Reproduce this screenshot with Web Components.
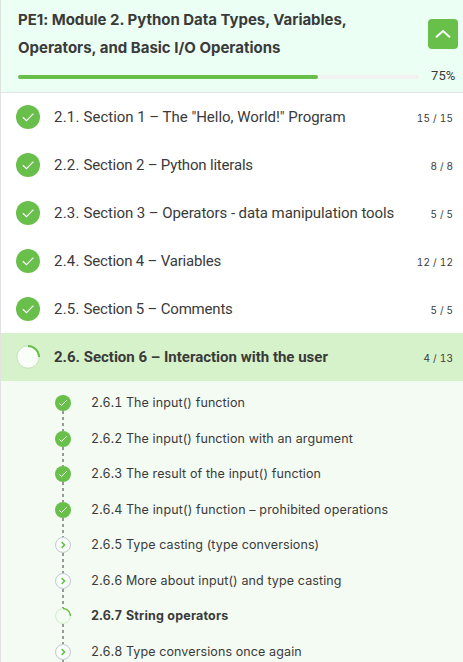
<!DOCTYPE html>
<html lang="en">
<head>
<meta charset="utf-8">
<title>Course outline</title>
<style>
html, body { margin: 0; height: 100%; overflow: hidden; background: #fff; }
body { font-family: Inter, "Liberation Sans", sans-serif; color: #3a3a3a; --green: #68bf4a; }
</style>
</head>
<body>
<course-outline>
  <module-header value="75"><span style="letter-spacing:-.03px">PE1: Module 2. Python Data Types, Variables,</span><br>Operators, and Basic I/O Operations</module-header>
  <section-row state="done" num="2.1." count="15 / 15" style="--track:-.02px">Section 1 – The "Hello, World!" Program</section-row>
  <section-row state="done" num="2.2." count="8 / 8" style="--track:-.19px">Section 2 – Python literals</section-row>
  <section-row state="done" num="2.3." count="5 / 5" style="--track:-.08px">Section 3 – Operators - data manipulation tools</section-row>
  <section-row state="done" num="2.4." count="12 / 12" style="--track:-.2px">Section 4 – Variables</section-row>
  <section-row state="done" num="2.5." count="5 / 5" style="--track:-.2px">Section 5 – Comments</section-row>
  <section-row state="progress" active num="2.6." count="4 / 13">Section 6 – Interaction with the user</section-row>
  <lesson-list>
    <lesson-item state="done" num="2.6.1">The input() function</lesson-item>
    <lesson-item state="done" num="2.6.2">The input() function with an argument</lesson-item>
    <lesson-item state="done" num="2.6.3">The result of the input() function</lesson-item>
    <lesson-item state="done" num="2.6.4" style="--track:.14px">The input() function – prohibited operations</lesson-item>
    <lesson-item state="todo" num="2.6.5">Type casting (type conversions)</lesson-item>
    <lesson-item state="todo" num="2.6.6">More about input() and type casting</lesson-item>
    <lesson-item state="progress" active num="2.6.7" style="--track:.2px;--num-track:.1px">String operators</lesson-item>
    <lesson-item state="todo" num="2.6.8">Type conversions once again</lesson-item>
  </lesson-list>
</course-outline>
<script>
const define = (name, html, setup, observed = []) => {
  const template = document.createElement('template');
  template.innerHTML = html;
  customElements.define(name, class extends HTMLElement {
    static observedAttributes = observed;
    constructor() {
      super();
      this.attachShadow({ mode: 'open' }).append(template.content.cloneNode(true));
    }
    connectedCallback() { if (setup) setup(this, this.shadowRoot); }
    attributeChangedCallback() { if (this.isConnected) setup(this, this.shadowRoot); }
  });
};

define('course-outline', `
<style>
:host { display: flex; flex-direction: column; box-sizing: border-box; height: 662px; overflow: hidden; border-left: 1px solid #e2e2e2; }
</style><slot></slot>`);

define('module-header', `
<style>
:host { display: block; flex: none; box-sizing: border-box; height: 93px; padding: 6px 5px 0 17px; background: #ecfff4; border-bottom: 1px solid #e0e5e2; }
.top { display: flex; justify-content: space-between; }
h1 { margin: 0; font-size: 15px; line-height: 28px; font-weight: 700; letter-spacing: 0; white-space: nowrap; }
button { margin: 13px 0 0; padding: 0; width: 30px; height: 30px; border: 0; border-radius: 4px; background: var(--green); }
svg { display: block; }
.bar { display: flex; align-items: center; height: 14px; margin-top: 8px; }
.track { width: 401px; height: 4px; border-radius: 2px; background: #f2f2f2; }
.fill { height: 4px; border-radius: 2px; background: var(--green); }
.pct { margin-left: 12px; font: 13px/14px Roboto, sans-serif; letter-spacing: .1px; padding-bottom: 2px; }
</style>
<div class="top"><h1><slot></slot></h1><button aria-label="Collapse"><svg width="30" height="30" fill="none" stroke="#fff" stroke-width="2"><path d="M8 18.2 15 12l7 6.2"/></svg></button></div>
<div class="bar"><div class="track"><div class="fill"></div></div><span class="pct"></span></div>`, (host, root) => {
  const value = host.getAttribute('value');
  root.querySelector('.fill').style.width = value * 4 + 'px';
  root.querySelector('.pct').textContent = value + '%';
});

define('status-icon', `
<style>
:host { display: block; flex: none; }
svg { display: block; width: 100%; height: 100%; }
</style><svg viewBox="0 0 24 24" fill="none"></svg>`, (host, root) => {
  const small = host.hasAttribute('small');
  const shapes = {
    done: `<circle cx="12" cy="12" r="12" fill="#68bf4a"/><path d="${small ? 'M6.5 12.6l3.2 3L17.5 8' : 'M6.8 12.2l3.7 3.5L17.4 8.6'}" stroke="#fff" stroke-width="${small ? 1.5 : 1.3}"/>`,
    todo: `<circle cx="12" cy="12" r="11.2" fill="#fafefa" stroke="#bccacf" stroke-width="1.5"/><path d="M10 7.7l4.3 4.3-4.3 4.3" stroke="#68bf4a" stroke-width="2.4"/>`,
    progress: small
      ? `<circle cx="12" cy="12" r="11.2" stroke="#c8ebbe" stroke-width="1.3"/><path d="M12 .8A11.2 11.2 0 0 1 23.2 12" stroke="#68bf4a" stroke-width="1.9"/>`
      : `<circle cx="12" cy="12" r="11.2" fill="#f9fef8" stroke="#a9d09c" stroke-width=".6"/><path d="M12 1A11 11 0 0 1 23 12" stroke="#68bf4a" stroke-width="1.9"/>`
  };
  root.querySelector('svg').innerHTML = shapes[host.getAttribute('state')] || '';
}, ['state']);

define('section-row', `
<style>
:host { display: flex; flex: none; align-items: center; box-sizing: border-box; height: 48px; padding: 0 10px 0 15px; }
:host([active]) { background: #d6f2ca; }
status-icon { width: 24px; height: 24px; }
.title { flex: 1; margin-left: 14px; font: 400 15px/24px Roboto, sans-serif; letter-spacing: var(--track, 0px); white-space: nowrap; }
.num { letter-spacing: .22px; }
:host([active]) .num { letter-spacing: 0; }
:host([active]) .title { font-weight: 700; }
.count { font-size: 10px; line-height: 14px; letter-spacing: .35px; word-spacing: -.4px; font-variant-numeric: tabular-nums; white-space: nowrap; padding-top: 1px; margin-right: -.35px; }
</style><status-icon></status-icon><span class="title"><span class="num"></span><slot></slot></span><span class="count"></span>`, (host, root) => {
  root.querySelector('status-icon').setAttribute('state', host.getAttribute('state'));
  root.querySelector('.num').textContent = host.getAttribute('num') + ' ';
  root.querySelector('.count').textContent = host.getAttribute('count');
});

define('lesson-list', `
<style>
:host { display: flex; flex: 1; flex-direction: column; min-height: 0; padding: 4px 0 0 54px; background: #f3fbf3; }
</style><slot></slot>`);

define('lesson-item', `
<style>
:host { display: flex; flex: none; align-items: stretch; height: 35.5px; }
.rail { display: flex; flex-direction: column; align-items: center; width: 16px; padding-top: 10px; box-sizing: border-box; }
status-icon { width: 16px; height: 16px; }
.line { width: 2px; height: 19.5px; margin-bottom: -10px; flex: none; background: repeating-linear-gradient(#999 0 3px, transparent 3px 6px); }
.title { margin-left: 20px; font-size: 12.5px; line-height: 36.5px; letter-spacing: var(--track, .11px); white-space: nowrap; }
.num { letter-spacing: var(--num-track, .08px); font-variant-numeric: tabular-nums; }
:host([active]) .title { font-weight: 700; }
</style><div class="rail"><status-icon small></status-icon><div class="line"></div></div><span class="title"><span class="num"></span><slot></slot></span>`, (host, root) => {
  root.querySelector('status-icon').setAttribute('state', host.getAttribute('state'));
  root.querySelector('.num').textContent = host.getAttribute('num') + ' ';
});
</script>
</body>
</html>
